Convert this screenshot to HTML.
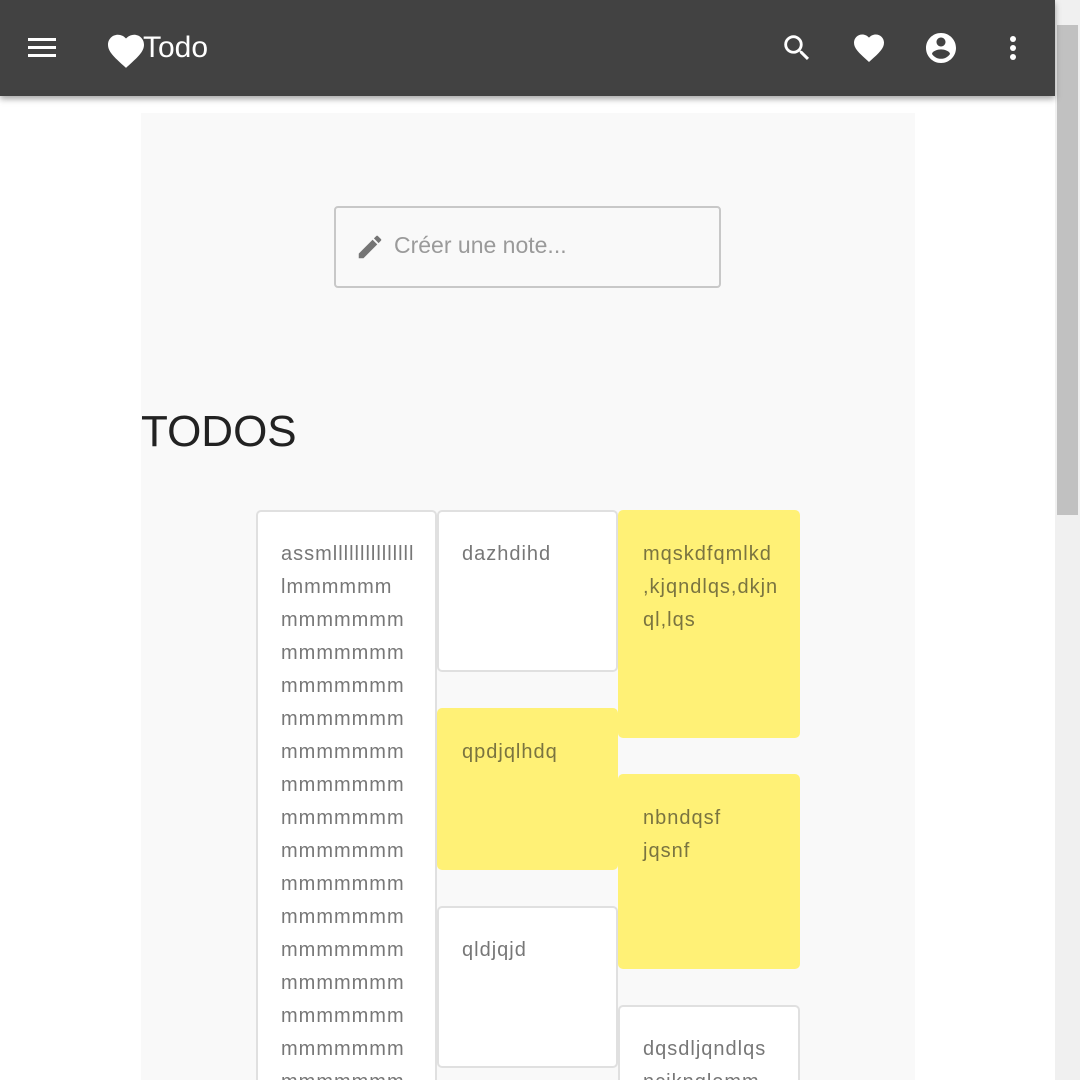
<!DOCTYPE html>
<html style="overflow:hidden;height:1080px"><head><style>
body{margin:0;width:1080px;height:1080px;overflow:hidden;background:#fff;font-family:"Liberation Sans",sans-serif;position:relative}
.hdr{position:absolute;left:0;top:0;width:1055px;height:96px;background:#424242;box-shadow:0 3px 6px rgba(0,0,0,.35);z-index:2}
.sb{position:absolute;left:1055px;top:0;width:25px;height:1080px;background:#f0f0f0}
.th{position:absolute;left:2px;top:25px;width:21px;height:490px;background:#c1c1c1}
.panel{position:absolute;left:141px;top:113px;width:774px;height:967px;background:#f9f9f9}
.inp{position:absolute;left:334px;top:206px;width:383px;height:78px;border:2px solid #c8c8c8;border-radius:4px;background:#f9f9f9}
.inp span{position:absolute;left:58px;top:24px;font-size:23px;color:#9a9a9a}
h1{position:absolute;left:141px;top:407px;margin:0;font-size:44px;font-weight:500;color:#222;letter-spacing:0}
.c{position:absolute;box-sizing:border-box;border:2px solid #e0e0e0;border-radius:5px;background:#fff;padding:26px 0 0 23px;font-size:20px;line-height:33px;color:#777;overflow:hidden;letter-spacing:1px;white-space:nowrap}
.y{background:#fff176;border-color:#fff176;color:#7a7440}
</style></head><body>
<div class="hdr">
<svg style="position:absolute;left:28px;top:38px" width="28" height="20"><rect y="0" width="28" height="3" fill="#fff"/><rect y="8" width="28" height="3" fill="#fff"/><rect y="16" width="28" height="3" fill="#fff"/></svg>
<svg style="position:absolute;left:108px;top:33px" width="36" height="36" viewBox="2 2 20 20"><path d="M12 21.35l-1.45-1.32C5.4 15.36 2 12.28 2 8.5 2 5.42 4.42 3 7.5 3c1.74 0 3.41.81 4.5 2.09C13.09 3.81 14.76 3 16.5 3 19.58 3 22 5.42 22 8.5c0 3.78-3.4 6.86-8.55 11.54L12 21.35z" fill="#fff"/></svg>
<div style="position:absolute;left:143px;top:31px;font-size:30px;color:#fff">Todo</div>
<svg style="position:absolute;left:780px;top:31px" width="34" height="34" viewBox="0 0 24 24"><path fill="#fff" d="M15.5 14h-.79l-.28-.27A6.47 6.47 0 0016 9.5 6.5 6.5 0 109.5 16c1.61 0 3.09-.59 4.23-1.57l.27.28v.79l5 4.99L20.49 19l-4.99-5zm-6 0C7.01 14 5 11.99 5 9.5S7.01 5 9.5 5 14 7.01 14 9.5 11.99 14 9.5 14z"/></svg>
<svg style="position:absolute;left:851px;top:30px" width="36" height="36" viewBox="0 0 24 24"><path fill="#fff" d="M12 21.35l-1.45-1.32C5.4 15.36 2 12.28 2 8.5 2 5.42 4.42 3 7.5 3c1.74 0 3.41.81 4.5 2.09C13.09 3.81 14.76 3 16.5 3 19.58 3 22 5.42 22 8.5c0 3.78-3.4 6.86-8.55 11.54L12 21.35z"/></svg>
<svg style="position:absolute;left:923px;top:30px" width="36" height="36" viewBox="0 0 24 24"><path fill="#fff" d="M12 2C6.48 2 2 6.48 2 12s4.48 10 10 10 10-4.48 10-10S17.52 2 12 2zm0 3c1.66 0 3 1.34 3 3s-1.34 3-3 3-3-1.34-3-3 1.34-3 3-3zm0 14.2c-2.5 0-4.710-1.28-6-3.22.03-1.990 4-3.08 6-3.08 1.99 0 5.97 1.09 6 3.08-1.29 1.94-3.5 3.22-6 3.22z"/></svg>
<svg style="position:absolute;left:1008px;top:35px" width="10" height="26"><circle cx="5" cy="4" r="3" fill="#fff"/><circle cx="5" cy="13" r="3" fill="#fff"/><circle cx="5" cy="22" r="3" fill="#fff"/></svg>
</div>
<div class="sb"><div class="th"></div></div>
<div class="panel"></div>
<div class="inp"><svg style="position:absolute;left:19px;top:24px" width="30" height="30" viewBox="0 0 24 24"><path fill="#757575" d="M3 17.25V21h3.75L17.81 9.94l-3.75-3.75L3 17.25zM20.71 7.04a1 1 0 000-1.41l-2.34-2.34a1 1 0 00-1.41 0l-1.83 1.83 3.75 3.75 1.83-1.83z"/></svg><span>Créer une note...</span></div>
<h1>TODOS</h1>
<div class="c" style="left:256px;top:510px;width:181px;height:570px;border-bottom:none;border-radius:5px 5px 0 0">assmlllllllllllllll<br>lmmmmmm<br>mmmmmmm<br>mmmmmmm<br>mmmmmmm<br>mmmmmmm<br>mmmmmmm<br>mmmmmmm<br>mmmmmmm<br>mmmmmmm<br>mmmmmmm<br>mmmmmmm<br>mmmmmmm<br>mmmmmmm<br>mmmmmmm<br>mmmmmmm<br>mmmmmmm</div>
<div class="c" style="left:437px;top:510px;width:181px;height:162px">dazhdihd</div>
<div class="c y" style="left:437px;top:708px;width:181px;height:162px">qpdjqlhdq</div>
<div class="c" style="left:437px;top:906px;width:181px;height:162px">qldjqjd</div>
<div class="c y" style="left:618px;top:510px;width:182px;height:228px">mqskdfqmlkd<br>,kjqndlqs,dkjn<br>ql,lqs</div>
<div class="c y" style="left:618px;top:774px;width:182px;height:195px">nbndqsf<br>jqsnf</div>
<div class="c" style="left:618px;top:1005px;width:182px;height:75px;border-bottom:none;border-radius:5px 5px 0 0">dqsdljqndlqs<br>ncjknqlemm</div>
</body></html>
